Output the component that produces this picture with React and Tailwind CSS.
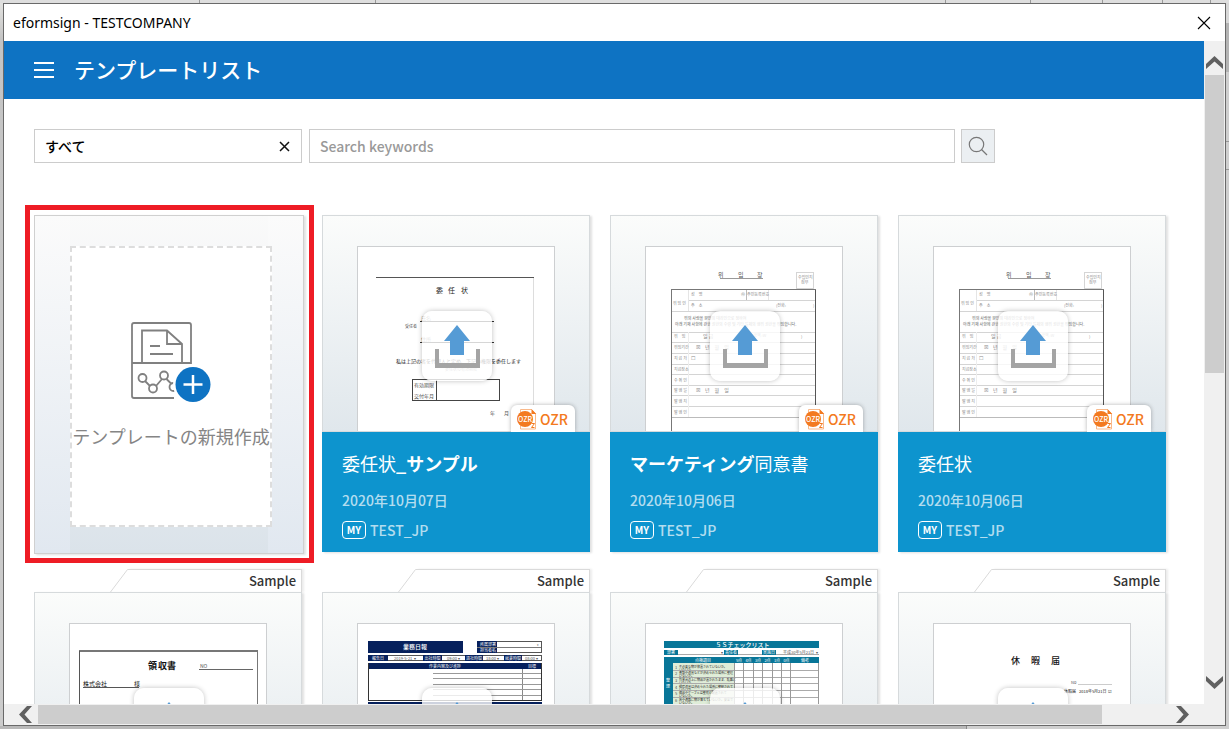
import React from "react";

const jp = "font-['Noto_Sans_CJK_JP',sans-serif]";

function T({ x, y, s = 5, fill = "#555", w, children, anchor }) {
  return (
    <text x={x} y={y} fontSize={s} fill={fill} fontWeight={w} textAnchor={anchor}>
      {children}
    </text>
  );
}

function H({ x1, x2, y, c = "#999", w = 1 }) {
  return <rect x={x1} y={y} width={x2 - x1} height={w} fill={c} />;
}

function V({ x, y1, y2, c = "#999", w = 1 }) {
  return <rect x={x} y={y1} width={w} height={y2 - y1} fill={c} />;
}

function ProxyDoc() {
  return (
    <>
      <H x1={19} x2={177} y={31} c="#555" />
      <V x={176} y1={32} y2={190} c="#ddd" />
      <T x={79} y={47} s={7} fill="#222">委</T>
      <T x={91} y={47} s={7} fill="#222">任</T>
      <T x={104} y={47} s={7} fill="#222">状</T>
      <T x={48} y={82} s={4}>受任者</T>
      <T x={64} y={74} fill="#888">氏名</T>
      <T x={64} y={95} fill="#888">住所</T>
      <H x1={63} x2={137} y={75} c="#333" />
      <H x1={63} x2={137} y={96} c="#333" />
      <T x={39} y={117} s={5} fill="#222">私は上記の者を代理人と定め、下記の権限を委任します</T>
      <T x={88} y={125} s={4} fill="#999">委任状の有効期限</T>
      <rect x={55.5} y={133.5} width={87} height={21} fill="none" stroke="#444" />
      <V x={79} y1={133} y2={155} c="#444" />
      <T x={57} y={141} s={5}>有効期限</T>
      <T x={57} y={152} s={5}>交付年月</T>
      <T x={133} y={169} s={5}>年</T>
      <T x={147} y={169} s={5}>月</T>
      <path d="M23 185.500h13M102 185.500h14" stroke="#999" strokeDasharray="2 1" />
    </>
  );
}

const koRows = [
  ["위　임", 91, "일 금", 58],
  ["위임기간", 102, "☒　년　월　일", 51],
  ["지 급 처", 113, "☐", 46],
  ["지급장소", 124, "", 0],
  ["수 취 인", 135, "", 0],
  ["발 행 일", 145, "☒　년　월　일", 51],
  ["발 행 지", 156, "", 0],
  ["발 행 인", 167, "", 0],
];

function MandateDoc() {
  const k = "#888";
  return (
    <>
      <T x={73} y={31} s={6}>위</T>
      <T x={93} y={31} s={6}>임</T>
      <T x={112} y={31} s={6}>장</T>
      <H x1={75} x2={118} y={32} c="#999" />
      <rect x={151.5} y={26.5} width={17} height={16} fill="none" stroke="#aaa" strokeDasharray="1 1" />
      <T x={153} y={33} s={4} fill={k}>수입인지</T>
      <T x={156} y={38} s={4} fill={k}>첨부</T>
      <V x={26} y1={43} y2={190} c="#777" />
      <V x={170} y1={43} y2={190} c="#555" />
      <H x1={26} x2={171} y={43} c="#777" />
      {[65, 86, 96, 107, 118, 128, 139, 149, 160].map((y) => (
        <H key={y} x1={27} x2={170} y={y} c="#d4d4d4" />
      ))}
      <H x1={43} x2={170} y={54} c="#d4d4d4" />
      <H x1={27} x2={170} y={171} c="#bbb" />
      <V x={43} y1={44} y2={65} c="#e5e5e5" />
      <V x={43} y1={86} y2={171} c="#eee" />
      <V x={101} y1={44} y2={54} c="#bbb" />
      <V x={123} y1={44} y2={54} c="#e5e5e5" />
      <T x={28} y={59} s={4} fill={k}>위 임 인</T>
      <T x={46} y={50} s={4} fill={k}>성　명</T>
      <T x={46} y={61} s={4} fill={k}>주　소</T>
      <T x={96} y={50} s={4} fill={k}>㊞</T>
      <T x={102} y={50} s={4} fill={k}>주민등록번호</T>
      <T x={131} y={61} s={4} fill={k}>(전화:</T>
      <T x={168} y={61} s={4} fill={k}>)</T>
      <T x={39} y={74} s={4} fill="#666">위의 사람을 본인의 대리인으로 정하여</T>
      <T x={30} y={80} s={4} fill="#666">아래 기재 사항에 관한 권한의 수령 및 기타 일체의 행위 권한을 위임합니다.</T>
      <T x={107} y={91} s={4} fill={k}>(금액 :W</T>
      <T x={156} y={92} s={4} fill={k}>)</T>
      {koRows.map(([a, y, b, x]) => (
        <g key={y}>
          <T x={29} y={y + 1} s={4} fill={k}>{a}</T>
          <T x={x} y={y + 1} s={5} fill={k}>{b}</T>
        </g>
      ))}
    </>
  );
}

function ReceiptDoc() {
  return (
    <>
      <H x1={10} x2={189} y={27} c="#777" w={2} />
      <V x={10} y1={28} y2={190} c="#555" />
      <V x={188} y1={28} y2={190} c="#777" />
      <T x={79} y={46} s={9} fill="#111" w="700">領</T>
      <T x={89} y={46} s={9} fill="#111" w="700">収</T>
      <T x={98} y={46} s={9} fill="#111" w="700">書</T>
      <T x={131} y={45} s={5}>NO</T>
      <H x1={130} x2={184} y={46} c="#666" />
      <T x={14} y={63} s={6} fill="#111">株式会社</T>
      <T x={65} y={63} s={6} fill="#111">様</T>
      <H x1={14} x2={70} y={64} c="#555" />
    </>
  );
}

function DailyDoc() {
  const n = "#06205c";
  return (
    <>
      <rect x={11} y={18} width={95} height={12} fill={n} />
      <T x={58} y={26} s={6} fill="#fff" anchor="middle" w="500">業務日報</T>
      <rect x={120.5} y={18.5} width={64} height={11} fill="#fff" stroke="#555" />
      <rect x={120} y={18} width={20} height={12} fill={n} />
      <H x1={120} x2={184} y={24} c="#777" />
      <T x={123} y={23} s={4} fill="#fff">所属部署</T>
      <T x={123} y={28.5} s={4} fill="#fff">担当者名</T>
      <T x={180} y={22.5} s={3}>▾</T>
      <rect x={11.5} y={32.5} width={173} height={5} fill="#fff" stroke="#555" />
      {[
        [11, 20, "報告日"],
        [66, 19, "出社時間"],
        [108, 18, "退社時間"],
        [147, 18, "就業時間"],
      ].map(([x, w, t]) => (
        <g key={x}>
          <rect x={x} y={32} width={w} height={6} fill={n} />
          <T x={x + w / 2} y={36.5} s={4} fill="#fff" anchor="middle">{t}</T>
        </g>
      ))}
      <T x={37} y={36.5} s={4}>2019-5-21</T>
      <T x={57} y={36.5} s={4}>▾</T>
      <T x={90} y={36.5} s={4}>09:00 ▾</T>
      <T x={129} y={36.5} s={4}>18:00 ▾</T>
      <T x={168} y={36.5} s={4}>08:00 ▾</T>
      <rect x={11} y={40} width={174} height={6} fill={n} />
      <T x={88} y={44.5} s={4} fill="#fff" anchor="middle">作業内容及び進捗</T>
      <T x={175} y={44.5} s={4} fill="#fff" anchor="middle">目標</T>
      <V x={11} y1={40} y2={77} c="#333" />
      <V x={184} y1={40} y2={77} c="#333" />
      <V x={165} y1={46} y2={77} c="#888" />
      {[50, 55, 61, 66, 72].map((y) => (
        <H key={y} x1={76} x2={184} y={y} c="#999" />
      ))}
      <H x1={11} x2={185} y={77} c="#333" />
      <H x1={11} x2={185} y={79} c={n} w={6} />
    </>
  );
}

const checks = [
  "不必要な物が放置されていないか。",
  "書類や道具などが決められた場所に整理",
  "作業台の上に物品が置かれたまま、乱雑に",
  "掃除道具は決められた場所に整頓されて",
  "備品やケーブルは整然と配置されて",
  "床や通路に物が落ちていないか。安全で",
];

function ChecklistDoc() {
  const t = "#087698";
  return (
    <>
      <rect x={19} y={18} width={155} height={7} fill={t} />
      {[..."５Ｓチェックリスト"].map((c, i) => (
        <T key={i} x={73.500 + i * 6} y={23.5} s={6} fill="#fff" w="500" anchor="middle">{c}</T>
      ))}
      <H x1={19} x2={174} y={31} c="#aaa" />
      {[
        [19, "部署"],
        [79, "責任者"],
        [117, "実施日"],
      ].map(([x, s]) => (
        <g key={x}>
          <rect x={x} y={27} width={14} height={5} fill={t} />
          <T x={x + 7} y={31} s={4} fill="#fff" anchor="middle">{s}</T>
        </g>
      ))}
      <T x={76} y={31} s={4}>▾</T>
      <T x={138} y={31} s={4}>平成30年5月21日</T>
      <T x={171} y={31} s={4}>▾</T>
      <rect x={19} y={34} width={155} height={6} fill={t} />
      <rect x={19} y={34} width={9} height={60} fill={t} />
      <T x={58} y={39} s={4} fill="#fff" anchor="middle">点検項目</T>
      {["5点", "4点", "3点", "2点", "1点", "0点"].map((s, i) => (
        <T key={s} x={94 + i * 9.5} y={39} s={4} fill="#fff" anchor="middle">{s}</T>
      ))}
      <T x={160} y={39} s={4} fill="#fff" anchor="middle">備考</T>
      <T x={21} y={59} s={4} fill="#fff">整</T>
      <T x={21} y={65} s={4} fill="#fff">理</T>
      <rect x={28} y={40} width={61} height={60} fill="#dfedd8" />
      {checks.map((s, i) => (
        <g key={s}>
          <T x={30} y={45.5 + i * 6.7} s={4}>{i + 1}</T>
          <T x={34} y={44.5 + i * 6.7} s={3} fill="#222">{s}</T>
          <T x={34} y={47.5 + i * 6.7} s={3} fill="#222">いないか。</T>
          <H x1={28} x2={174} y={Math.round(47 + i * 6.7)} c="#aaa" />
        </g>
      ))}
      {[89, 98, 108, 117, 127, 136, 145, 173].map((x) => (
        <V key={x} x={x} y1={40} y2={95} c="#999" />
      ))}
    </>
  );
}

function LeaveDoc() {
  return (
    <>
      <T x={78} y={41} s={9} fill="#111" w="500">休</T>
      <T x={98} y={41} s={9} fill="#111" w="500">暇</T>
      <T x={118} y={41} s={9} fill="#111" w="500">届</T>
      <T x={138} y={61} s={4}>No</T>
      <H x1={145} x2={179} y={61} c="#ccc" />
      <T x={131} y={70} s={4} fill="#222">休暇届</T>
      <T x={146} y={70} s={4} fill="#222">2018年5月21日</T>
      <T x={175} y={70} s={4} fill="#222">☑</T>
    </>
  );
}

function UploadIcon() {
  return (
    <svg viewBox="0 0 70 70" className="size-[70px]" aria-hidden="true">
      <path d="M13 38h4v14h37V38h4v19H13z" fill="#a4a4a4" />
      <path d="M35 14 48 30h-6v14H28V30h-6z" fill="#559bd5" />
    </svg>
  );
}

function Preview({ doc, className }) {
  const Doc = doc;
  return (
    <div className={`relative overflow-hidden border border-[#d6dadc] bg-gradient-to-b from-[#fbfcfb] to-[#e0e7ec] ${className}`}>
      <div className="relative mx-auto mt-[30px] h-[280px] w-[198px] border border-[#cdcfd1] bg-white">
        <svg viewBox="1 1 196 278" className="h-[278px] w-[196px]" fontFamily="'Noto Sans CJK JP','Noto Sans CJK KR',sans-serif">
          <Doc />
        </svg>
        <button
          aria-label="Upload"
          className="absolute top-16 left-16 size-[70px] rounded-[10px] bg-white/80 shadow-[0_0_5px_rgba(0,0,0,0.25)]"
        >
          <UploadIcon />
        </button>
      </div>
    </div>
  );
}

function OzrBadge() {
  return (
    <div className="absolute top-[190px] right-[15px] flex h-[27px] w-16 items-center gap-[3px] rounded-t-md bg-white pl-1 shadow-[0_0_4px_rgba(0,0,0,0.3)] [clip-path:inset(-6px_-6px_0_-6px)]">
      <svg viewBox="4 2 22 23" className="h-[23px] w-[22px] shrink-0" aria-hidden="true">
        <path d="M9.500 4.500h11l4 4v15.500h-15z" fill="#fff" stroke="#f9b98a" />
        <path d="M20.500 4v5h4.800z" fill="#f37a20" />
        <circle cx="14" cy="14" r="8" fill="#f37a20" />
        <text x="14" y="16.500" fontSize="7" fontWeight="500" fill="#fff" textAnchor="middle" fontFamily="'Noto Sans CJK JP',sans-serif">OZR</text>
        <path d="M20.500 18.500h3l-3 4h3" fill="none" stroke="#f37a20" />
      </svg>
      <span className="text-sm leading-[26px] font-medium text-[#f37a20]">OZR</span>
    </div>
  );
}

function TemplateCard({ doc, title, date }) {
  return (
    <article className="relative shadow-[2px_1px_2px_rgba(0,0,0,0.12)]">
      <Preview doc={doc} className="h-[217px]" />
      <OzrBadge />
      <div className="relative flex h-[120px] flex-col bg-[#0d94ce] px-5 pt-[19px] text-white">
        <h2 className="text-lg leading-6 font-normal">{title}</h2>
        <p className="mt-[13px] text-sm leading-6 font-medium text-white/70">{date}</p>
        <p className="mt-[9px] flex items-center gap-1 text-sm leading-[18px] font-medium text-white/70">
          <span className="flex h-[18px] w-6 items-center justify-center rounded border border-white text-[10px] font-bold text-white">MY</span>
          TEST_JP
        </p>
      </div>
    </article>
  );
}

function SampleCard({ doc }) {
  return (
    <article>
      <div className="flex h-[23px]">
        <svg viewBox="0 0 18 23" className="ml-[76px] h-[23px] w-[18px]" aria-hidden="true">
          <path d="M.5 23 17.500.5h1" fill="none" stroke="#dadada" />
        </svg>
        <div className="flex-1 border-t border-r border-[#dadada] pr-[5px] text-right text-[13px] leading-[22px] font-medium text-[#333] shadow-[2px_0_2px_rgba(0,0,0,0.08)]">
          Sample
        </div>
      </div>
      <Preview doc={doc} className="h-[217px] shadow-[2px_1px_2px_rgba(0,0,0,0.12)]" />
    </article>
  );
}

function NewTemplateCard() {
  return (
    <article className="relative -mr-0.5 -mb-0.5 border border-[#d0d0d0] bg-gradient-to-b from-[#fbfbfb] to-[#e1e8f0] pl-[35px] shadow-[2px_1px_2px_rgba(0,0,0,0.12)]">
      <div className="h-full w-[198px] bg-gradient-to-b from-[#fafafa] to-[#dbe3ea] pt-[30px]">
        <button className="flex h-[281px] w-[202px] flex-col items-center border-2 border-dashed border-[#ddd] bg-white pt-[74px] text-lg leading-[26px] whitespace-nowrap text-[#858585]">
          <svg viewBox="0 0 80 80" className="size-20" fill="none" stroke="#808080" strokeWidth="1.800" aria-hidden="true">
            <path d="M60 42V3q0-2-2-2H3Q1 1 1 3v71q0 2 2 2h40M1 41h59M11 41V8.500h25L51 22v19M36 8.500V22h15M19 24h10M19 32h23" />
            <path d="m14 59 5 5M25 64l6-7M35.500 57l5 5" />
            <circle cx="11.500" cy="56" r="4" />
            <circle cx="22" cy="66.500" r="4" />
            <circle cx="33" cy="53.500" r="4" />
            <circle cx="42.500" cy="65" r="4" />
            <circle cx="62" cy="62.500" r="20" fill="#fff" stroke="none" />
            <circle cx="62" cy="62.500" r="17.500" fill="#0e73c3" stroke="none" />
            <path d="M52.500 62.500h19M62 53v19" stroke="#fff" strokeWidth="2.500" />
          </svg>
          <span className="mt-[21px]">テンプレートの新規作成</span>
        </button>
      </div>
      <div className="pointer-events-none absolute -top-[11px] -right-[11px] -bottom-[10px] -left-[10px] border-[5px] border-[#ee1c25]" />
    </article>
  );
}

function Chevron({ className = "" }) {
  return (
    <svg viewBox="0 0 17 13" className={`h-[13px] w-[17px] shrink-0 ${className}`} aria-hidden="true">
      <path d="M8.500 0 17 8v5L8.500 5.500 0 13V8z" fill="#606060" />
    </svg>
  );
}

export default function App() {
  return (
    <div className={`flex h-screen flex-col overflow-hidden bg-[#c8c8c8] text-black ${jp}`}>
      <div className="flex h-[3px] shrink-0 bg-[#dedede]">
        <div className="w-[200px] border-r border-[#999]" />
        <div className="w-44 border-r border-[#999]" />
        <div className="flex-1 border-r border-[#999]" />
        <div className="w-[85px] border-r border-[#999]" />
        <div className="w-[72px] border-r border-[#999]" />
        <div className="w-[60px] border-r border-[#999]" />
        <div className="w-12 border-r border-[#999]" />
        <div className="w-[18px]" />
      </div>
      <div className="flex min-h-0 flex-1">
        <div className="w-[3px] bg-gradient-to-b from-[#e2e2e0] from-0% via-[#c4c4c4] via-5% to-[#cccccc]" />
        <div className="flex min-w-0 flex-1 flex-col border border-[#696969] bg-white">
          <div className="flex h-[37px] shrink-0 items-center justify-between pr-[14px] pl-[9px]">
            <span className="font-['Noto_Sans',sans-serif] text-sm">eformsign - TESTCOMPANY</span>
            <button aria-label="Close">
              <svg viewBox="0 0 14 14" className="size-[14px]" stroke="#000" strokeWidth="1.100" aria-hidden="true">
                <path d="m1 1 12 12M13 1 1 13" />
              </svg>
            </button>
          </div>
          <div className="flex min-h-0 flex-1">
            <main className="min-w-0 flex-1 overflow-hidden">
              <header className="flex h-[58px] items-center gap-5 bg-[#0e73c3] pl-[30px] text-white">
                <button aria-label="Menu" className="flex w-5 flex-col gap-[5px]">
                  <span className="h-0.5 bg-white" />
                  <span className="h-0.5 bg-white" />
                  <span className="h-0.5 bg-white" />
                </button>
                <h1 className="pb-0.5 text-[21px] leading-8 font-medium">テンプレートリスト</h1>
              </header>
              <form className="mt-[30px] mr-[209px] ml-[30px] flex h-[34px]" onSubmit={(e) => e.preventDefault()}>
                <div className="mr-[7px] flex w-[268px] shrink-0 items-center border border-[#ccc] pr-[11px] pl-[10px]">
                  <input aria-label="カテゴリ" defaultValue="すべて" className="min-w-0 flex-1 text-sm font-medium outline-none" />
                  <button type="button" aria-label="Clear">
                    <svg viewBox="0 0 11 11" className="size-[11px]" stroke="#111" strokeWidth="1.500" aria-hidden="true">
                      <path d="m1 1 9 9M10 1l-9 9" />
                    </svg>
                  </button>
                </div>
                <input aria-label="Search keywords" placeholder="Search keywords" className="mr-1.5 min-w-0 flex-1 border border-[#ccc] px-[10px] text-sm font-medium outline-none placeholder:text-[#999]" />
                <button aria-label="Search" className="flex w-[34px] shrink-0 items-center justify-center border border-[#ccc] bg-[#ebeff2]">
                  <svg viewBox="0 0 20 20" className="size-5" fill="none" stroke="#777" strokeWidth="1.200" aria-hidden="true">
                    <circle cx="8.500" cy="8.500" r="7.200" />
                    <path d="m13.500 13.500 5.500 5.500" />
                  </svg>
                </button>
              </form>
              <section className="mt-[52px] mr-[38px] ml-[30px] grid grid-cols-4 gap-x-5 gap-y-[17px]">
                <NewTemplateCard />
                <TemplateCard doc={ProxyDoc} title={<>委任状<span className="font-bold">_サンプル</span></>} date="2020年10月07日" />
                <TemplateCard doc={MandateDoc} title={<><span className="font-bold">マーケティング</span>同意書</>} date="2020年10月06日" />
                <TemplateCard doc={MandateDoc} title="委任状" date="2020年10月06日" />
                <SampleCard doc={ReceiptDoc} />
                <SampleCard doc={DailyDoc} />
                <SampleCard doc={ChecklistDoc} />
                <SampleCard doc={LeaveDoc} />
              </section>
            </main>
            <div className="flex w-[21px] shrink-0 flex-col items-center bg-[#f0f0f0]">
              <button aria-label="Scroll up" className="flex h-[34px] w-full shrink-0 items-center justify-center pt-2">
                <Chevron />
              </button>
              <div className="flex w-full flex-1 justify-center">
                <div className="h-1/2 w-[19px] bg-[#cdcdcd]" />
              </div>
              <button aria-label="Scroll down" className="flex h-[34px] w-full shrink-0 items-center justify-center pb-[10px]">
                <Chevron className="rotate-180" />
              </button>
            </div>
          </div>
          <div className="flex h-[21px] shrink-0 items-center bg-[#f0f0f0] pr-[21px]">
            <button aria-label="Scroll left" className="flex h-full w-[34px] shrink-0 items-center justify-center pl-[9px]">
              <Chevron className="-rotate-90" />
            </button>
            <div className="flex-1">
              <div className="h-[19px] w-[94%] bg-[#cdcdcd]" />
            </div>
            <button aria-label="Scroll right" className="flex h-full w-[34px] shrink-0 items-center justify-center pr-[9px]">
              <Chevron className="rotate-90" />
            </button>
          </div>
        </div>
        <div className="flex w-[3px] flex-col">
          <div className="h-5 bg-[#d8d8d8]" />
          <div className="h-[49px] bg-[#b4b4b4]" />
          <div className="h-[70px] border-b border-[#999] bg-[#cfcfcf]" />
          <div className="h-7 border-b border-[#999] bg-[#cfcfcf]" />
          <div className="flex-1 bg-[#cfcfcf]" />
        </div>
      </div>
      <div className="flex h-[3px] shrink-0">
        <div className="w-[967px] border-r border-[#888] bg-[#b8b8b8]" />
        <div className="flex-1 bg-[#cfcfcf]" />
      </div>
    </div>
  );
}
